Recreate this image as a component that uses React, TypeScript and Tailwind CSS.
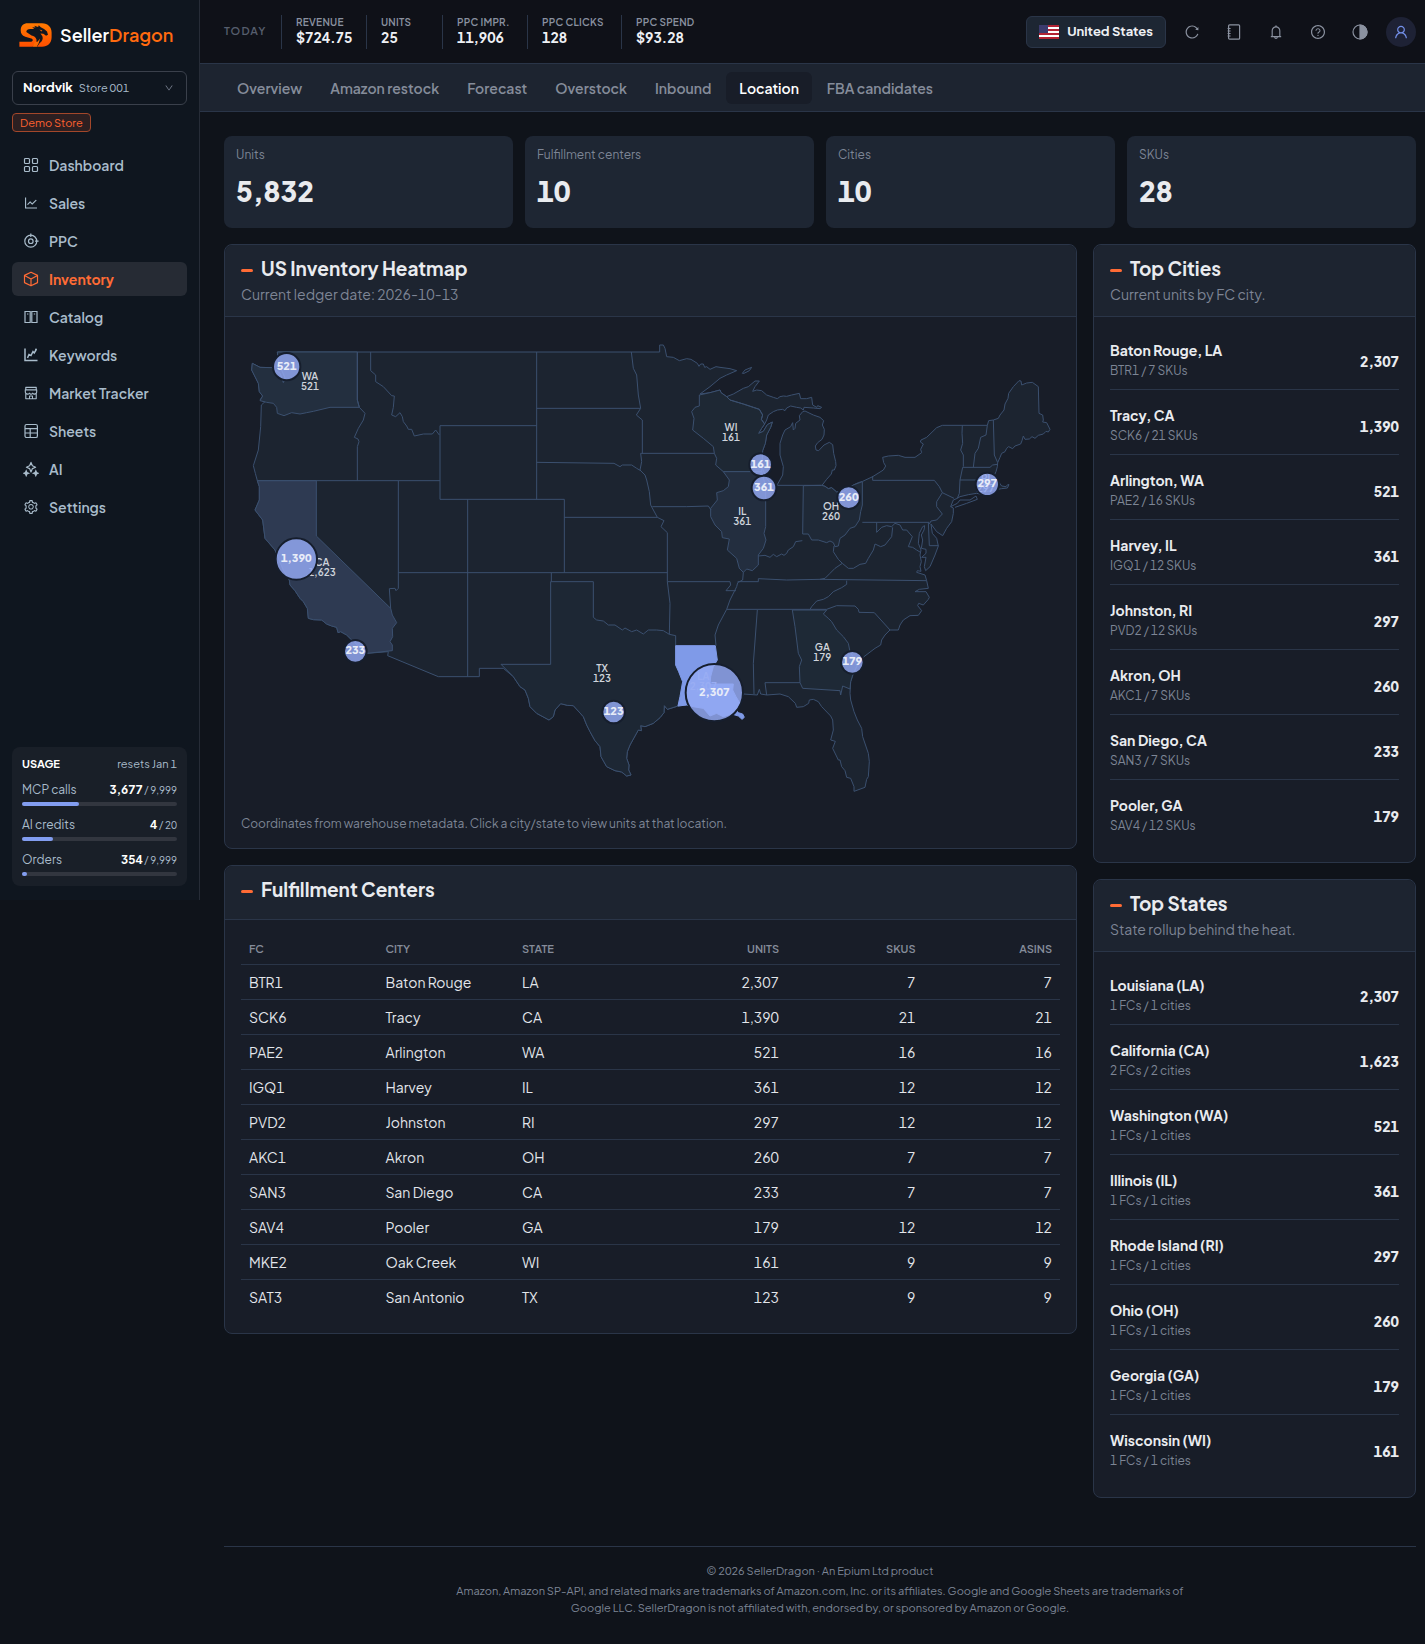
import React from 'react';
import {
  AiOutlineBell,
  AiOutlineDown,
  AiOutlineLineChart,
  AiOutlineQuestionCircle,
  AiOutlineReload,
  AiOutlineSetting,
  AiOutlineShop,
  AiOutlineUser,
} from 'react-icons/ai';

const line = { fill: 'none', stroke: 'currentColor', strokeWidth: 1.2, viewBox: '0 0 16 16', className: 'w-4 h-4' };

const GridIcon = () => (
  <svg {...line}>
    <rect x="1.5" y="1.5" width="5" height="5" rx="1" />
    <rect x="9.5" y="1.5" width="5" height="5" rx="1" />
    <rect x="1.5" y="9.5" width="5" height="5" rx="1" />
    <rect x="9.5" y="9.5" width="5" height="5" rx="1" />
  </svg>
);

const TargetIcon = () => (
  <svg {...line}>
    <circle cx="7.8" cy="8.2" r="6" />
    <circle cx="7.8" cy="8.2" r="2.3" />
    <path d="M7.8 0.6v3.4M12 8.2h3.6" />
  </svg>
);

const CubeIcon = () => (
  <svg {...line}>
    <path d="M8 1.2 14.5 4.4v7.2L8 14.8 1.5 11.6V4.4zM1.5 4.4 8 8l6.5-3.6M8 8v6.8" strokeLinejoin="round" />
  </svg>
);

const CatalogIcon = () => (
  <svg {...line}>
    <path d="M2 2.5h5.2v11H2zM8.8 2.5H14v11H8.8z" />
    <path d="M4 5h1.4M10.8 5h1.4" />
  </svg>
);

const KeywordsIcon = () => (
  <svg {...line}>
    <path d="M2 1.5v12h12.5M4.5 11 6 7.5l2 1 2-4 1.2 1.4L13 3" strokeWidth="1.5" />
    <circle cx="13" cy="2.6" r="1" fill="currentColor" stroke="none" />
  </svg>
);

const SheetIcon = () => (
  <svg {...line}>
    <rect x="2" y="1.5" width="12.4" height="13" rx="1.6" />
    <path d="M2 5.6h12.4M2 10h12.4M7.2 5.6v9" />
  </svg>
);

const SparkleIcon = () => (
  <svg {...line}>
    <path d="M8 1.4 9.4 4.8 12.6 6.2 9.4 7.6 8 11 6.6 7.6 3.4 6.2 6.6 4.8z" strokeLinejoin="round" />
    <path
      d="M3.2 9.8 3.9 11.5 5.6 12.2 3.9 12.9 3.2 14.6 2.5 12.9.8 12.2 2.5 11.5zM12.8 9.8 13.5 11.5 15.2 12.2 13.5 12.9 12.8 14.6 12.1 12.9 10.4 12.2 12.1 11.5z"
      fill="currentColor"
    />
  </svg>
);

const NotebookIcon = () => (
  <svg {...line}>
    <rect x="2.6" y="0.8" width="11" height="14.4" rx="1" />
    <path d="M1.6 4.5h3M1.600 7h3M1.600 9.500h3M1.600 12h3" />
  </svg>
);

const ContrastIcon = () => (
  <svg {...line}>
    <circle cx="8" cy="8" r="7" />
    <path d="M8 1a7 7 0 0 1 0 14z" fill="currentColor" />
  </svg>
);

const FlagIcon = () => (
  <svg viewBox="0 0 20 14" className="w-5 h-3.5">
    <path d="M0 0h20v14H0z" fill="#fff" />
    <path d="M0 0h20v2H0zM0 4h20v2H0zM0 8h20v2H0zM0 12h20v2H0z" fill="#b22234" />
    <path d="M0 0h9v8H0z" fill="#3c3b6e" />
  </svg>
);

// Drawn on a grid of three units to a pixel
const Logo = () => (
  <svg viewBox="56 71 100 73" className="w-[33px] h-6">
    <defs>
      <linearGradient id="logo" x1="0" y1="0" x2="0" y2="1">
        <stop offset="0" stopColor="#ff7a00" />
        <stop offset="1" stopColor="#ff4f00" />
      </linearGradient>
    </defs>
    <path
      d="M82 72h44c18 0 29 12 29 28v14c0 18-12 29-29 29H57v-15h34c8 0 9-8 2-10l-18-5C65 110 61 102 61 93c0-13 9-21 21-21z"
      fill="url(#logo)"
    />
    <path
      d="M78 98c0-6 5-9 12-9h12l-6-5 10 1-4-6 12 4 2-5 6 6 10 5 9 8 3 10-6 3-8-6-9-1 6 8c3 8-1 16-8 21l-8 11h-14c8-6 14-13 12-22-2-7-8-10-15-12z"
      fill="#10161f"
    />
    <path d="M118 91l9 3-3 3zM104 128l8 0 8-10-4 14-6 11h-12z" fill="#ff6a00" />
  </svg>
);

const navItems = [
  { label: 'Dashboard', icon: <GridIcon /> },
  { label: 'Sales', icon: <AiOutlineLineChart className="w-4 h-4" /> },
  { label: 'PPC', icon: <TargetIcon /> },
  { label: 'Inventory', icon: <CubeIcon />, active: true },
  { label: 'Catalog', icon: <CatalogIcon /> },
  { label: 'Keywords', icon: <KeywordsIcon /> },
  { label: 'Market Tracker', icon: <AiOutlineShop className="w-4 h-4" /> },
  { label: 'Sheets', icon: <SheetIcon /> },
  { label: 'AI', icon: <SparkleIcon /> },
  { label: 'Settings', icon: <AiOutlineSetting className="w-4 h-4" /> },
];

const usage = [
  { label: 'MCP calls', used: '3,677', limit: '9,999', percent: 37 },
  { label: 'AI credits', used: '4', limit: '20', percent: 20 },
  { label: 'Orders', used: '354', limit: '9,999', percent: 3 },
];

const today = [
  { label: 'REVENUE', value: '$724.75', width: 'w-[85px]' },
  { label: 'UNITS', value: '25', width: 'w-[76px]' },
  { label: 'PPC IMPR.', value: '11,906', width: 'w-[85px]' },
  { label: 'PPC CLICKS', value: '128', width: 'w-[94px]' },
  { label: 'PPC SPEND', value: '$93.28', width: 'w-[94px]' },
];

const tabs = ['Overview', 'Amazon restock', 'Forecast', 'Overstock', 'Inbound', 'Location', 'FBA candidates'];

const stats = [
  { label: 'Units', value: '5,832' },
  { label: 'Fulfillment centers', value: '10' },
  { label: 'Cities', value: '10' },
  { label: 'SKUs', value: '28' },
];

const centers = [
  ['BTR1', 'Baton Rouge', 'LA', '2,307', '7', '7'],
  ['SCK6', 'Tracy', 'CA', '1,390', '21', '21'],
  ['PAE2', 'Arlington', 'WA', '521', '16', '16'],
  ['IGQ1', 'Harvey', 'IL', '361', '12', '12'],
  ['PVD2', 'Johnston', 'RI', '297', '12', '12'],
  ['AKC1', 'Akron', 'OH', '260', '7', '7'],
  ['SAN3', 'San Diego', 'CA', '233', '7', '7'],
  ['SAV4', 'Pooler', 'GA', '179', '12', '12'],
  ['MKE2', 'Oak Creek', 'WI', '161', '9', '9'],
  ['SAT3', 'San Antonio', 'TX', '123', '9', '9'],
];

const cities = [
  { name: 'Baton Rouge, LA', detail: 'BTR1 / 7 SKUs', units: '2,307' },
  { name: 'Tracy, CA', detail: 'SCK6 / 21 SKUs', units: '1,390' },
  { name: 'Arlington, WA', detail: 'PAE2 / 16 SKUs', units: '521' },
  { name: 'Harvey, IL', detail: 'IGQ1 / 12 SKUs', units: '361' },
  { name: 'Johnston, RI', detail: 'PVD2 / 12 SKUs', units: '297' },
  { name: 'Akron, OH', detail: 'AKC1 / 7 SKUs', units: '260' },
  { name: 'San Diego, CA', detail: 'SAN3 / 7 SKUs', units: '233' },
  { name: 'Pooler, GA', detail: 'SAV4 / 12 SKUs', units: '179' },
];

const states = [
  { name: 'Louisiana (LA)', detail: '1 FCs / 1 cities', units: '2,307' },
  { name: 'California (CA)', detail: '2 FCs / 2 cities', units: '1,623' },
  { name: 'Washington (WA)', detail: '1 FCs / 1 cities', units: '521' },
  { name: 'Illinois (IL)', detail: '1 FCs / 1 cities', units: '361' },
  { name: 'Rhode Island (RI)', detail: '1 FCs / 1 cities', units: '297' },
  { name: 'Ohio (OH)', detail: '1 FCs / 1 cities', units: '260' },
  { name: 'Georgia (GA)', detail: '1 FCs / 1 cities', units: '179' },
  { name: 'Wisconsin (WI)', detail: '1 FCs / 1 cities', units: '161' },
];

// Map geometry, three units to a pixel at full width
const country =
  'M172 96H1319V75L1330 75 1335 85 1340 110 1360 112 1378 122 1400 116 1413 118 1432 130 1437 139 1442 132 1450 132 1454 142 1460 140 1470 148 1488 140 1500 142 1530 146 1550 152 1520 165 1500 175 1470 200 1440 222 1470 218 1500 210 1503 218 1520 230 1540 222 1570 205 1585 200 1605 183 1618 183 1605 200 1598 214 1610 210 1625 212 1640 225 1660 232 1672 236 1680 230 1690 228 1700 229 1715 225 1738 220 1742 236 1760 236 1775 232 1778 255 1790 262 1793 257 1805 262 1800 266 1780 264 1752 262 1750 270 1742 264 1730 262 1712 258 1700 264 1695 272 1688 268 1672 270 1660 275 1645 285 1640 300 1634 312 1625 325 1616 340 1630 334 1642 314 1657 306 1652 322 1640 345 1636 370 1628 392 1625 440 1640 475 1655 494 1672 494 1688 465 1690 440 1680 405 1680 370 1688 345 1695 330 1712 320 1718 308 1720 330 1725 325 1727 310 1740 300 1738 287 1748 275 1755 273 1780 285 1800 292 1811 302 1807 315 1813 328 1812 345 1806 358 1793 368 1786 378 1788 390 1796 392 1812 375 1828 367 1838 374 1841 400 1847 425 1848 437 1843 450 1837 450 1834 462 1820 478 1806 496 1815 499 1825 506 1835 503 1850 516 1870 515 1900 495 1915 488 1928 484 1958 470 1990 450 1997 438 1991 428 1988 412 2005 408 2035 406 2055 412 2085 412 2105 398 2102 388 2110 372 2101 366 2103 360 2120 352 2150 323 2167 316H2302L2306 302 2320 300 2335 295 2340 285 2352 270 2355 252 2364 235 2366 220 2380 200 2397 182 2403 183 2405 195 2420 189 2437 187 2455 200 2457 280 2468 285 2470 300 2468 306 2480 308 2485 318 2490 328 2485 336 2478 334 2470 342 2455 346 2445 355 2436 350 2428 357 2415 358 2410 348 2406 362 2402 372 2385 378 2378 386 2366 380 2360 385 2355 395 2345 400 2340 412 2333 428 2332 440 2328 455 2322 468 2332 480 2345 498 2358 500 2363 494 2367 494 2362 504 2345 506 2320 510 2300 515 2280 522 2270 520 2245 524 2220 530 2212 535 2200 540 2192 560 2200 564 2200 580 2195 605 2180 625 2168 647 2150 635 2133 612 2137 640 2150 655 2155 678 2145 705 2130 740 2117 752 2113 740 2118 712 2105 712 2118 700 2118 688 2104 685 2108 660 2104 645 2112 630 2114 617 2108 620 2098 640 2095 670 2103 690 2100 705 2104 725 2100 740 2103 754 2092 752 2090 757 2115 765 2120 782 2125 805 2098 808 2085 815 2118 815 2128 832 2125 838 2110 855 2096 850 2093 857 2105 872 2095 886 2070 887 2050 900 2040 915 2035 930 2010 930 1995 945 1985 960 1982 975 1965 985 1932 1010 1910 1040 1900 1060 1892 1085 1890 1120 1892 1140 1902 1175 1912 1200 1925 1225 1928 1250 1945 1300 1948 1325 1945 1370 1940 1378 1935 1402 1902 1414 1902 1400 1892 1375 1880 1372 1875 1352 1865 1340 1860 1320 1855 1320 1838 1285 1846 1264 1832 1260 1840 1230 1838 1200 1832 1188 1805 1160 1795 1145 1780 1138 1768 1140 1766 1150 1750 1160 1730 1162 1726 1150 1705 1130 1680 1122 1640 1125 1622 1122 1618 1108 1612 1125 1570 1122 1560 1150 1548 1168 1555 1180 1570 1185 1568 1197 1555 1185 1530 1180 1510 1190 1490 1180 1450 1165 1420 1160 1400 1155 1374 1158 1342 1168 1333 1157 1332 1178 1320 1193 1300 1210 1275 1220 1262 1217 1264 1232 1255 1230 1245 1248 1230 1275 1222 1295 1220 1315 1227 1335 1226 1350 1233 1365 1220 1368 1205 1356 1185 1352 1160 1340 1143 1310 1140 1280 1125 1262 1110 1235 1100 1215 1090 1190 1060 1157 1042 1156 1022 1151 1005 1170 1000 1190 987 1200 950 1180 930 1160 925 1135 915 1110 900 1100 880 1070 850 1045H778V1070H655L503 1007 505 995 440 1000 390 955 380 945 362 935 354 938 350 922 335 918 320 912 305 900 280 899 265 895 262 865 250 845 240 835 225 812 210 795 208 780 190 750 165 690 135 655 128 600 105 570 118 540 118 500 112 482 106 460 100 437 115 390 122 320 124 255 135 245 120 240 128 228 118 215 115 190 95 150 97 130 120 142 155 143 180 160 190 188 196 175 185 150 175 120z';

const borders =
  'M412 96V240L418 262 435 280 430 300 415 325 403 352 414 357 417 365 412 380V482M112 482H660M452 96V152L467 165 467 185 490 200 515 227 523 228 520 262 515 285 527 290 540 278 547 290 550 305 560 318 565 328 575 328 583 348 610 342 637 342 647 330 658 345M660 317H950M660 317V538H1033V758M950 96V538M535 482V805L528 812 525 805 508 806 512 865M535 758H1342M743 538V1070' +
  'M950 265H1261M950 427 1182 430 1200 440 1207 435 1235 435 1250 445 1262 452M1033 592H1312M1234 96 1240 145 1250 165 1255 225 1262 265 1249 285 1267 300V400M1483 400H1262L1265 425 1260 450 1275 465 1280 480 1288 515 1292 555 1312 592 1332 602 1323 620 1342 638V785L1350 850 1348 943M1297 560H1400L1465 558 1473 570' +
  'M1558 745 1570 757 1568 780 1553 788 1550 800 1530 840 1520 868 1495 915 1485 945 1488 977M1342 785H1530L1532 795 1518 812H1548M1553 785H1615V776L1700 780 1800 778 2120 782M1520 868H1820M1612 870 1600 1030 1602 1122M1740 1088H1635L1640 1125' +
  'M1520 230 1530 240 1570 252 1600 262 1618 268 1628 285 1624 298 1634 312M1672 496H1750L1805 496M1615 708 1635 706 1650 712 1660 703 1670 710 1685 702 1692 706 1700 700 1705 690 1720 680 1727 665 1747 662' +
  'M994 758V785M1927 607H2128M1958 468V481H2143L2158 500 2167 518 2202 535M2167 518 2150 545 2150 560 2167 582 2150 600 2133 603 2128 612M2125 607 2128 677H2155M1970 607V637L1985 622 2000 617 2015 620 2025 610 2040 615 2048 630 2060 630 2077 650 2065 680 2078 682 2090 690 2103 698M2018 622 2015 650 1995 675 1982 680 1965 672 1960 690 1945 715 1937 730 1920 733 1900 745 1885 745 1867 730 1855 718 1840 695 1842 678M1867 730 1845 745 1830 760 1815 775 1800 778M1880 782 1880 793 1865 803 1840 815 1825 830 1810 838 1790 843 1775 860 1770 868M1820 868 1850 857 1905 858 1915 868 1917 877 1963 878 2010 930' +
  'M2227 316 2226 340 2228 370 2222 390 2230 405 2230 440M2228 442H2310L2318 435 2332 433M2302 316 2298 345 2282 352 2275 385 2265 400 2260 442M2320 300 2323 405 2333 428M2228 442 2220 480 2218 520 2212 535M2220 480H2290V515M2192 560 2212 550 2220 540 2250 540 2268 528 2272 538 2240 550 2205 562M1567 160 1575 150 1595 142 1588 152 1572 160z';

const regions = [
  {
    id: 'WA', fill: '#232f3f', x: 270, y: 180, units: '521',
    d: 'M172 96H412V240L418 262H330L280 274 260 278 240 282 215 278 192 287 172 280 170 262 160 250 140 247 120 242 128 228 118 215 115 190 95 150 97 130 120 142 155 143 180 160 190 188 196 175 185 150 175 120z',
  },
  {
    id: 'CA', fill: '#2e3a52', x: 306, y: 738, units: '1,623',
    d: 'M112 482H289V648L512 865 517 885 530 908 517 925 518 950 510 965 517 975 517 992 440 1000 390 955 380 945 362 935 354 938 350 922 335 918 320 912 305 900 280 899 265 895 262 865 250 845 240 835 225 812 210 795 208 780 190 750 165 690 135 655 128 600 105 570 118 540 118 500z',
  },
  {
    id: 'TX', fill: '#1d2734', x: 1146, y: 1056, units: '123',
    d: 'M992 785H1120V892L1130 900 1150 903 1165 915 1185 915 1207 930 1215 924 1235 935 1250 930 1270 942 1285 930 1310 930 1330 932 1348 943 1367 947V1035L1376 1055 1388 1085 1380 1130 1374 1158 1342 1168 1333 1157 1332 1178 1320 1193 1300 1210 1275 1220 1262 1217 1264 1232 1255 1230 1245 1248 1230 1275 1222 1295 1220 1315 1227 1335 1226 1350 1233 1365 1220 1368 1205 1356 1185 1352 1160 1340 1143 1310 1140 1280 1125 1262 1110 1235 1100 1215 1090 1190 1060 1157 1042 1156 1022 1151 1005 1170 1000 1190 987 1200 950 1180 930 1160 925 1135 915 1110 900 1100 880 1070 843 1033H992z',
  },
  {
    id: 'WI', fill: '#1e2834', x: 1533, y: 333, units: '161',
    d: 'M1438 225 1470 218 1500 210 1503 218 1520 230 1530 240 1570 252 1600 262 1618 268 1628 285 1624 298 1634 312 1625 325 1616 340 1630 334 1642 314 1657 306 1652 322 1640 345 1636 370 1628 392 1625 455H1510L1487 435 1490 415 1483 400 1480 380 1450 355 1418 330 1422 295 1415 275 1425 262 1438 258z',
  },
  {
    id: 'IL', fill: '#232e3f', x: 1567, y: 585, units: '361',
    d: 'M1510 455H1625L1637 500V620L1632 640 1638 660 1630 685 1615 705 1615 735 1597 752 1580 747 1570 757 1558 745 1550 715 1522 690 1528 657 1507 653 1505 635 1485 615 1472 590 1472 565 1492 540 1490 518 1510 512 1525 500 1528 480z',
  },
  {
    id: 'OH', fill: '#1f2937', x: 1833, y: 570, units: '260',
    d: 'M1750 497 1805 496 1815 499 1825 506 1835 503 1850 516 1870 515 1900 495 1927 485V555L1922 575 1918 600 1905 620 1890 625 1875 645 1860 655 1855 678 1845 680 1840 668 1830 663 1820 668 1795 660 1775 660 1765 642H1748z',
  },
  {
    id: 'GA', fill: '#1e2936', x: 1807, y: 993, units: '179',
    d: 'M1717 870H1820L1810 882 1825 895 1835 905 1850 930 1870 950 1885 970 1890 995 1905 1020 1910 1040 1900 1060 1892 1085 1890 1107 1868 1098 1862 1125 1860 1112 1748 1105 1740 1088 1738 1040 1745 1020 1735 1000 1725 920z',
  },
  {
    id: 'RI', fill: '#232e3f', x: 2297, y: 486, units: '297',
    d: 'M2290 480H2308L2312 500 2290 515z',
  },
  {
    id: 'LA', fill: '#7f9ae8', x: 1450, y: 1081, units: '2,307',
    d: 'M1367 977H1486L1492 1020 1480 1040 1472 1070 1470 1092H1540L1538 1110 1548 1130 1560 1150 1548 1168 1555 1178 1568 1182 1573 1192 1566 1198 1555 1188 1535 1182 1510 1190 1490 1180 1470 1188 1450 1165 1420 1160 1400 1155 1374 1158 1380 1130 1388 1085 1376 1055 1367 1035z',
  },
];

const bubbles = [
  { x: 200, y: 140, r: 41, units: '521' },
  { x: 229, y: 717, r: 62, units: '1,390' },
  { x: 406, y: 994, r: 34, units: '233' },
  { x: 1181, y: 1176, r: 34, units: '123' },
  { x: 1622, y: 434, r: 34, units: '161' },
  { x: 1632, y: 504, r: 37, units: '361' },
  { x: 1483, y: 1118, r: 86, units: '2,307' },
  { x: 1886, y: 533, r: 34, units: '260' },
  { x: 2302, y: 493, r: 35, units: '297' },
  { x: 1897, y: 1027, r: 34, units: '179' },
];

const Heatmap = () => (
  <svg viewBox="63 42 2457 1422" className="w-full" role="img" aria-label="US inventory heatmap">
    <g stroke="#3b506f" strokeWidth="3" strokeLinejoin="round">
      <path d={country} fill="#1c2430" />
      {regions.map((region) => (
        <path key={region.id} d={region.d} fill={region.fill} stroke={region.id === 'LA' ? '#7f9ae8' : '#3b506f'} />
      ))}
      <path d={borders} fill="none" />
    </g>
    {regions.map((region) => (
      <text
        key={region.id}
        x={region.x}
        y={region.y}
        textAnchor="middle"
        fontSize="30"
        fontWeight="600"
        fill={region.id === 'LA' ? '#b4c2f2' : '#cfd4dc'}
      >
        {region.id}
        <tspan x={region.x} dy="30">
          {region.units}
        </tspan>
      </text>
    ))}
    {bubbles.map((bubble) => (
      <g key={bubble.units} className="cursor-pointer">
        <circle cx={bubble.x} cy={bubble.y} r={bubble.r} fill="#94a9f3" fillOpacity="0.84" stroke="#161e2d" strokeWidth="6" />
        <text x={bubble.x} y={bubble.y + 9} textAnchor="middle" fontSize="33" fontWeight="800" fill="#e8ecf8">
          {bubble.units}
        </text>
      </g>
    ))}
  </svg>
);

const PanelHeader = ({ title, subtitle }: { title: string; subtitle?: string }) => (
  <div className="min-h-[54px] px-4 pt-[9px] pb-2.5 bg-[#1d2430] border-b border-[#2a3548] rounded-t-lg">
    <h2 className="flex items-center gap-2 text-[19px] leading-7 font-bold text-[#e9ebef]">
      <span className="w-3 h-[3px] mt-1 rounded-sm bg-[#ff6b35]"></span>
      {title}
    </h2>
    {subtitle && <p className="text-sm leading-6 text-[#7d8595]">{subtitle}</p>}
  </div>
);

const panelClass = 'rounded-lg border border-[#2a3548] bg-[#181d28]';

const RankList = ({ title, subtitle, rows }: { title: string; subtitle: string; rows: typeof cities }) => (
  <section className={panelClass}>
    <PanelHeader title={title} subtitle={subtitle} />
    <ul className="px-4 pt-2 pb-[17px]">
      {rows.map((row) => (
        <li key={row.name} className="h-[65px] border-b border-[#2a3548] last:border-transparent">
          <button className="w-full h-full pt-2 flex items-center justify-between text-left">
            <span>
              <span className="block text-sm leading-5 font-bold text-[#e9ebef]">{row.name}</span>
              <span className="block text-xs leading-[22px] text-[#7d8595]">{row.detail}</span>
            </span>
            <span className="text-sm font-extrabold text-[#e9ebef]">{row.units}</span>
          </button>
        </li>
      ))}
    </ul>
  </section>
);

const Sidebar = () => (
  <aside className="w-[200px] h-[900px] shrink-0 flex flex-col px-3 pb-3.5 bg-[#0f161f] border-r border-[#262c37]">
    <a href="#" className="flex items-center gap-2 mt-[23px] ml-[7px]">
      <Logo />
      <span className="text-lg leading-6 font-semibold text-white">
        Seller<span className="text-[#ff6a0f]">Dragon</span>
      </span>
    </a>
    <button className="flex items-center mt-6 h-[34px] px-2.5 rounded-md border border-[#3a404b] text-[13px]">
      <span className="font-bold text-white">Nordvik</span>
      <span className="ml-1.5 text-[11px] text-[#a9bccb]">Store 001</span>
      <AiOutlineDown className="w-2.5 h-2.5 ml-auto mr-0.5 text-[#7d8595]" />
    </button>
    <span className="self-start mt-2 h-[19px] px-[7px] rounded border border-[#a3472a] bg-[#2c1f21] text-[11px] leading-[17px] text-[#ff6230]">
      Demo Store
    </span>
    <nav className="flex flex-col gap-1 mt-4">
      {navItems.map((item) => (
        <a
          key={item.label}
          href="#"
          className={
            item.active
              ? 'flex items-center gap-2.5 h-[34px] px-[11px] rounded-md bg-[#262b34] text-[#ff6b35] text-sm font-bold'
              : 'flex items-center gap-2.5 h-[34px] px-[11px] rounded-md text-[#a9bccb] text-sm font-semibold'
          }
        >
          {item.icon}
          {item.label}
        </a>
      ))}
    </nav>
    <div className="flex flex-col gap-[9px] mt-auto p-2.5 rounded-lg bg-[#191f28] text-[#a9bccb]">
      <div className="flex items-center justify-between leading-[14px] text-[11px]">
        <span className="font-bold text-white">USAGE</span>
        <span>resets Jan 1</span>
      </div>
      {usage.map((item) => (
        <div key={item.label}>
          <div className="flex items-center justify-between text-xs leading-5">
            <span>{item.label}</span>
            <span className="text-[10px]">
              <b className="text-xs text-white">{item.used}</b> / {item.limit}
            </span>
          </div>
          <div className="h-1 mt-0.5 rounded-full bg-[#32363f]">
            <div className="h-full rounded-full bg-[#829df0]" style={{ width: `${item.percent}%` }}></div>
          </div>
        </div>
      ))}
    </div>
  </aside>
);

const iconButton = 'w-[42px] h-8 flex items-center justify-center';

const Header = () => (
  <header className="flex items-center h-16 pl-6 pr-[9px] bg-[#0f1118] border-b border-[#2a3548]">
    <span className="w-[57px] text-[11px] font-semibold tracking-widest text-[#565e6d]">TODAY</span>
    {today.map((item) => (
      <div key={item.label} className={`${item.width} shrink-0 h-[34px] pl-3.5 border-l border-[#2a3548]`}>
        <div className="text-[10px] leading-[14px] font-semibold tracking-wide text-[#8a91a0]">{item.label}</div>
        <div className="text-sm leading-4 font-bold text-[#eef0f4]">{item.value}</div>
      </div>
    ))}
    <div className="flex items-center ml-auto text-[#8b92a0]">
      <button className="flex items-center gap-2 h-8 px-3 mr-[5px] rounded-md border border-[#2a3548] bg-[#1d2633] text-[13px] font-bold text-[#eef0f4]">
        <FlagIcon />
        United States
      </button>
      <button aria-label="Refresh" className={iconButton}>
        <AiOutlineReload className="w-4 h-4" />
      </button>
      <button aria-label="Notes" className={iconButton}>
        <NotebookIcon />
      </button>
      <button aria-label="Notifications" className={iconButton}>
        <AiOutlineBell className="w-4 h-4" />
      </button>
      <button aria-label="Help" className={iconButton}>
        <AiOutlineQuestionCircle className="w-4 h-4" />
      </button>
      <button aria-label="Theme" className={iconButton}>
        <ContrastIcon />
      </button>
      <button aria-label="Account" className="w-[30px] h-[30px] ml-[5px] flex items-center justify-center rounded-full bg-[#1e2235] text-[#7490ea]">
        <AiOutlineUser className="w-4 h-4" />
      </button>
    </div>
  </header>
);

const App = () => {
  return (
    <div className="flex min-h-screen bg-[#0f131a] text-[#e3e6eb] tabular-nums font-['Plus_Jakarta_Sans',Inter,sans-serif]">
      <Sidebar />
      <div className="flex-1 min-w-0">
        <Header />
        <nav className="flex items-center gap-0.5 h-12 px-6 bg-[#1d2430] border-b border-[#2a3548]">
          {tabs.map((tab) => (
            <a
              key={tab}
              href="#"
              className={
                tab === 'Location'
                  ? 'px-[13px] py-1.5 rounded-md bg-[#181d28] text-sm leading-5 font-semibold text-white'
                  : 'px-[13px] py-1.5 rounded-md text-sm leading-5 font-semibold text-[#858c9a]'
              }
            >
              {tab}
            </a>
          ))}
        </nav>
        <main className="pl-6 pr-[9px] pt-6">
          <div className="grid grid-cols-4 gap-3">
            {stats.map((stat) => (
              <div key={stat.label} className="h-[92px] px-3 py-2.5 rounded-lg bg-[#1e2633]">
                <div className="text-xs leading-[18px] text-[#7d8595]">{stat.label}</div>
                <div className="mt-[9px] text-[28px] leading-9 font-extrabold text-[#e9ebef]">{stat.value}</div>
              </div>
            ))}
          </div>
          <div className="grid grid-cols-[minmax(0,1fr)_323px] items-start gap-4 mt-4">
            <div className="flex flex-col gap-4">
              <section className={panelClass}>
                <PanelHeader title="US Inventory Heatmap" subtitle="Current ledger date: 2026-10-13" />
                <div className="px-4 pt-[17px] pb-3.5">
                  <Heatmap />
                  <p className="mt-1.5 text-xs leading-5 text-[#7d8595]">
                    Coordinates from warehouse metadata. Click a city/state to view units at that location.
                  </p>
                </div>
              </section>
              <section className={panelClass}>
                <PanelHeader title="Fulfillment Centers" />
                <div className="px-4 pt-3.5 pb-[19px]">
                  <table className="w-full table-fixed text-sm">
                    <thead>
                      <tr className="h-[30px] border-b border-[#2a3548] text-[11px] text-[#858c9a]">
                        {['FC', 'CITY', 'STATE', 'UNITS', 'SKUS', 'ASINS'].map((name, i) => (
                          <th key={name} className={i < 3 ? 'px-2 text-left font-semibold' : 'px-2 text-right font-semibold'}>
                            {name}
                          </th>
                        ))}
                      </tr>
                    </thead>
                    <tbody>
                      {centers.map((row) => (
                        <tr key={row[0]} className="h-[35px] border-b border-[#2a3548] last:border-b-0">
                          {row.map((cell, i) => (
                            <td key={i} className={i < 3 ? 'px-2' : 'px-2 text-right'}>
                              {cell}
                            </td>
                          ))}
                        </tr>
                      ))}
                    </tbody>
                  </table>
                </div>
              </section>
            </div>
            <div className="flex flex-col gap-4">
              <RankList title="Top Cities" subtitle="Current units by FC city." rows={cities} />
              <RankList title="Top States" subtitle="State rollup behind the heat." rows={states} />
            </div>
          </div>
          <footer className="mt-12 pt-[15px] pb-7 border-t border-[#2a3548] text-center text-[11px] leading-[17px] text-[#7d8595]">
            <p>© 2026 SellerDragon · An Epium Ltd product</p>
            <p className="max-w-[760px] mx-auto mt-[3px]">
              Amazon, Amazon SP-API, and related marks are trademarks of Amazon.com, Inc. or its affiliates. Google and
              Google Sheets are trademarks of Google LLC. SellerDragon is not affiliated with, endorsed by, or sponsored by
              Amazon or Google.
            </p>
          </footer>
        </main>
      </div>
    </div>
  );
};

export default App;
